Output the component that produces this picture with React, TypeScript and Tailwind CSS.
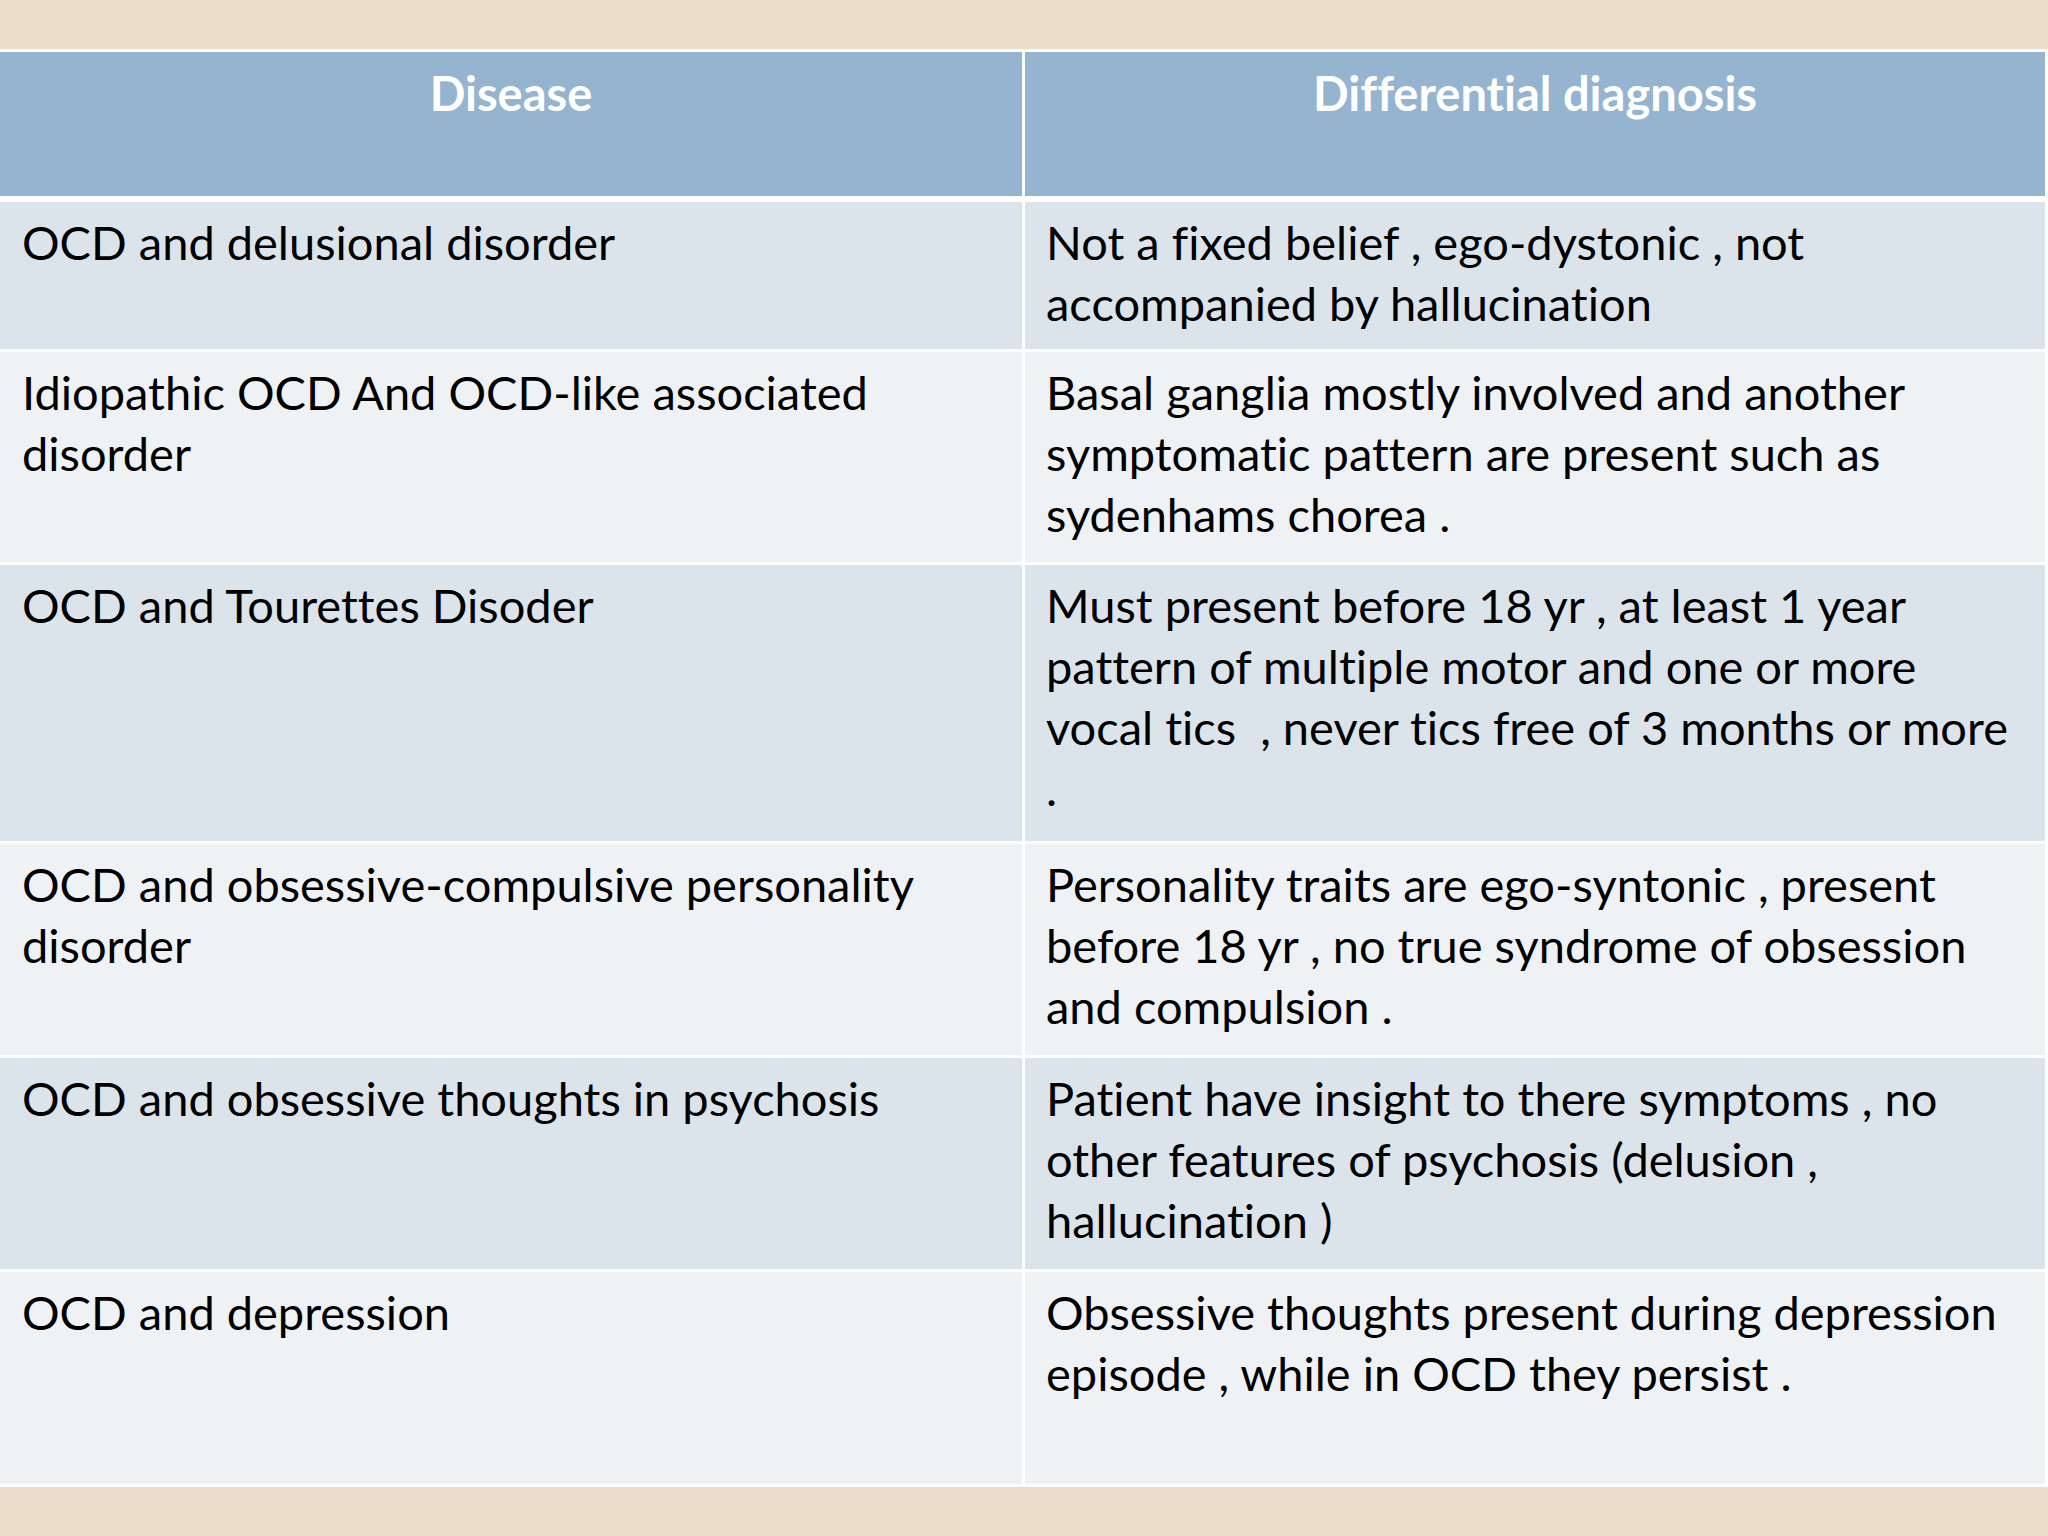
const rows: { h: string; bg: string; disease: string[]; diff: string[] }[] = [
  {
    h: "h-[147px]",
    bg: "bg-[#DBE3EB]",
    disease: ["OCD and delusional disorder"],
    diff: ["Not a fixed belief , ego-dystonic , not", "accompanied by hallucination"],
  },
  {
    h: "h-[210px]",
    bg: "bg-[#EEF2F5]",
    disease: ["Idiopathic OCD And OCD-like associated", "disorder"],
    diff: [
      "Basal ganglia mostly involved and another",
      "symptomatic pattern are present such as",
      "sydenhams chorea .",
    ],
  },
  {
    h: "h-[276px]",
    bg: "bg-[#DBE3EB]",
    disease: ["OCD and Tourettes Disoder"],
    diff: [
      "Must present before 18 yr , at least 1 year",
      "pattern of multiple motor and one or more",
      "vocal tics  , never tics free of 3 months or more",
      ".",
    ],
  },
  {
    h: "h-[211px]",
    bg: "bg-[#EEF2F5]",
    disease: ["OCD and obsessive-compulsive personality", "disorder"],
    diff: [
      "Personality traits are ego-syntonic , present",
      "before 18 yr , no true syndrome of obsession",
      "and compulsion .",
    ],
  },
  {
    h: "h-[211px]",
    bg: "bg-[#DBE3EB]",
    disease: ["OCD and obsessive thoughts in psychosis"],
    diff: [
      "Patient have insight to there symptoms , no",
      "other features of psychosis (delusion ,",
      "hallucination )",
    ],
  },
  {
    h: "h-[212px]",
    bg: "bg-[#EEF2F5]",
    disease: ["OCD and depression"],
    diff: ["Obsessive thoughts present during depression", "episode , while in OCD they persist ."],
  },
];

function Lines({ lines }: { lines: string[] }) {
  return (
    <>
      {lines.map((l, i) => (
        <div key={i} className="whitespace-pre">
          {l}
        </div>
      ))}
    </>
  );
}

export default function App() {
  return (
    <div className="flex h-[1536px] w-[2048px] flex-col overflow-hidden bg-[#EBDDC7] font-['Lato',sans-serif] text-[47px] leading-[61px] text-black [font-variant-ligatures:none]">
      <div className="h-[49px] shrink-0" />
      <div className="flex flex-col bg-white pt-[3px] pr-[3px] pb-[3px]">
        <div className="grid h-[144px] grid-cols-[1022px_1020px] gap-x-[3px]">
          <div className="bg-[#94B4D0] pt-[11px] text-center font-bold text-white">Disease</div>
          <div className="bg-[#94B4D0] pt-[11px] text-center font-bold text-white">
            Differential diagnosis
          </div>
        </div>
        <div className="mt-[6px] flex flex-col gap-[3px]">
          {rows.map((r, i) => (
            <div key={i} className={`grid grid-cols-[1022px_1020px] gap-x-[3px] ${r.h}`}>
              <div className={`${r.bg} overflow-hidden pt-[10px] pl-[22px]`}>
                <Lines lines={r.disease} />
              </div>
              <div className={`${r.bg} overflow-hidden pt-[10px] pl-[21px]`}>
                <Lines lines={r.diff} />
              </div>
            </div>
          ))}
        </div>
      </div>
    </div>
  );
}
